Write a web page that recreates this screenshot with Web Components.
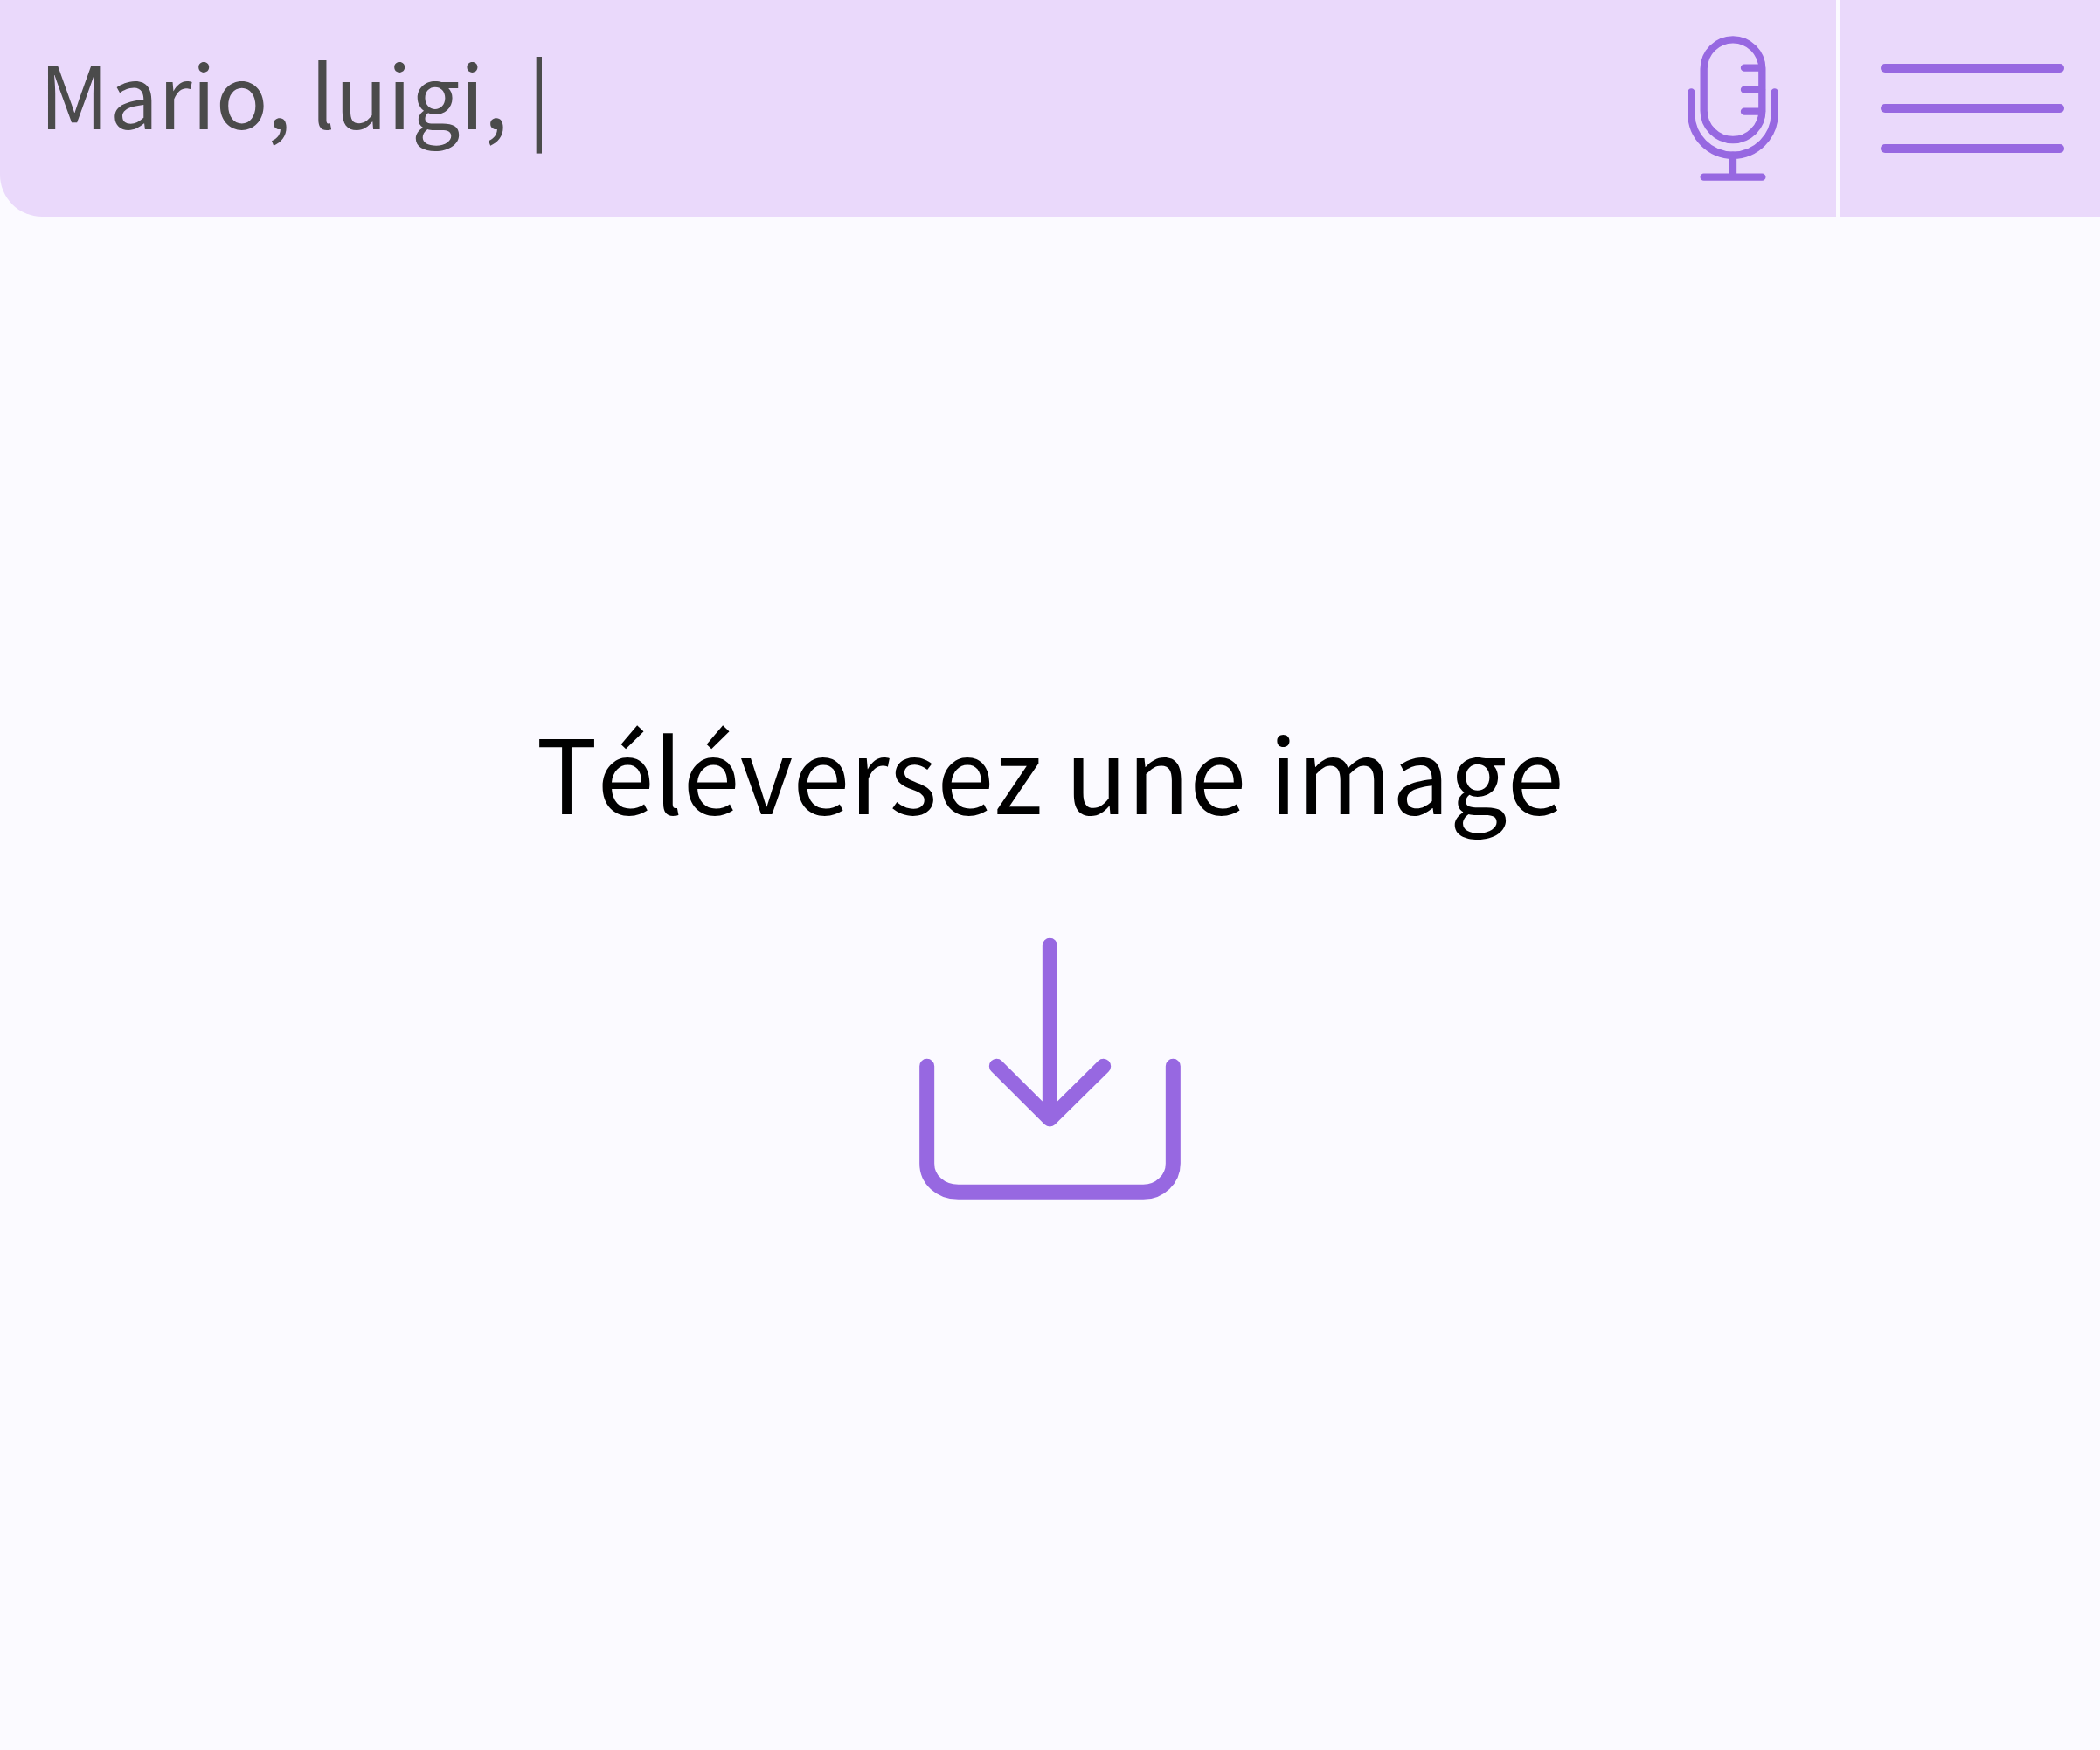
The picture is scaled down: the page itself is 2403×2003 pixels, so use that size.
<!DOCTYPE html>
<html lang="fr">
<head>
<meta charset="utf-8">
<meta name="viewport" content="width=device-width, initial-scale=1">
<title>Téléversez une image</title>
<style>
  :root {
    --bar: #ead9fb;
    --accent: #9768e1;
    --page: #fbfaff;
    --ink: #4b4b4b;
  }
  body {
    margin: 0;
    background: var(--page);
    font-family: "Noto Sans CJK JP", "Noto Sans", sans-serif;
  }
</style>
</head>
<body>
<upload-page></upload-page>

<script>
const define = (name, html) => {
  const template = document.createElement('template');
  template.innerHTML = html;
  customElements.define(name, class extends HTMLElement {
    constructor() {
      super();
      this.attachShadow({ mode: 'open' }).append(template.content.cloneNode(true));
    }
  });
};

define('mic-button', `
  <style>
    :host { display: flex; }
    button { display: flex; align-items: center; border: 0; margin: 0; padding: 0 66px; background: none; cursor: pointer; }
    svg { display: block; width: 104px; height: 168px; fill: none; stroke: var(--accent); stroke-width: 25; stroke-linecap: round; }
  </style>
  <button type="button" aria-label="Dicter">
    <svg viewBox="93 60 312 504" aria-hidden="true">
      <rect x="149" y="76" width="200" height="344" rx="100"/>
      <path d="M288 173H348M288 248H348M288 323H348"/>
      <path d="M106 256V330C106 409 170 473 249 473S392 409 392 330V256"/>
      <path d="M249 473V547M149 548H349"/>
    </svg>
  </button>`);

define('menu-button', `
  <style>
    :host { display: flex; }
    button { display: flex; flex-direction: column; justify-content: center; gap: 36px; border: 0; margin: 0; padding: 0 41px 0 46px; background: var(--bar); cursor: pointer; }
    span { width: 210px; height: 10px; border-radius: 5px; background: var(--accent); }
  </style>
  <button type="button" aria-label="Menu"><span></span><span></span><span></span></button>`);

define('search-bar', `
  <style>
    :host { display: flex; flex: 1; min-width: 0; background: var(--bar); border-bottom-left-radius: 48px; }
    input {
      flex: 1; min-width: 0; box-sizing: border-box; margin: 0; border: 0; outline: 0;
      padding: 0 0 38px 45px; background: none; color: var(--ink);
      font-family: inherit; font-size: 99px;
    }
  </style>
  <input type="text" aria-label="Recherche" value="Mario, luigi, |">
  <slot></slot>`);

define('upload-drop', `
  <style>
    :host { display: flex; justify-content: center; }
    button {
      display: flex; flex-direction: column; align-items: center; gap: 107px;
      border: 0; margin: 0; padding: 0; background: none; color: #000;
      font-family: inherit; font-size: 117px; font-kerning: none; cursor: pointer;
    }
    svg { display: block; width: 299px; height: 301px; fill: none; stroke: var(--accent); stroke-width: 51; stroke-linecap: round; stroke-linejoin: round; }
  </style>
  <button type="button">
    <slot></slot>
    <svg viewBox="66 69 897 903" aria-hidden="true">
      <path d="M514 97V693M331 511L514 693L698 511"/>
      <path d="M92 511V845C92 900 138 943 200 943H835C891 943 937 899 937 845V511"/>
    </svg>
  </button>`);

define('upload-page', `
  <style>
    :host { display: flex; flex-direction: column; min-height: 100vh; }
    header { display: flex; gap: 5px; height: 248px; }
    main { flex: 1; padding-top: 548px; }
  </style>
  <header>
    <search-bar><mic-button></mic-button></search-bar>
    <menu-button></menu-button>
  </header>
  <main>
    <upload-drop><span>Téléversez une image</span></upload-drop>
  </main>`);
</script>
</body>
</html>
